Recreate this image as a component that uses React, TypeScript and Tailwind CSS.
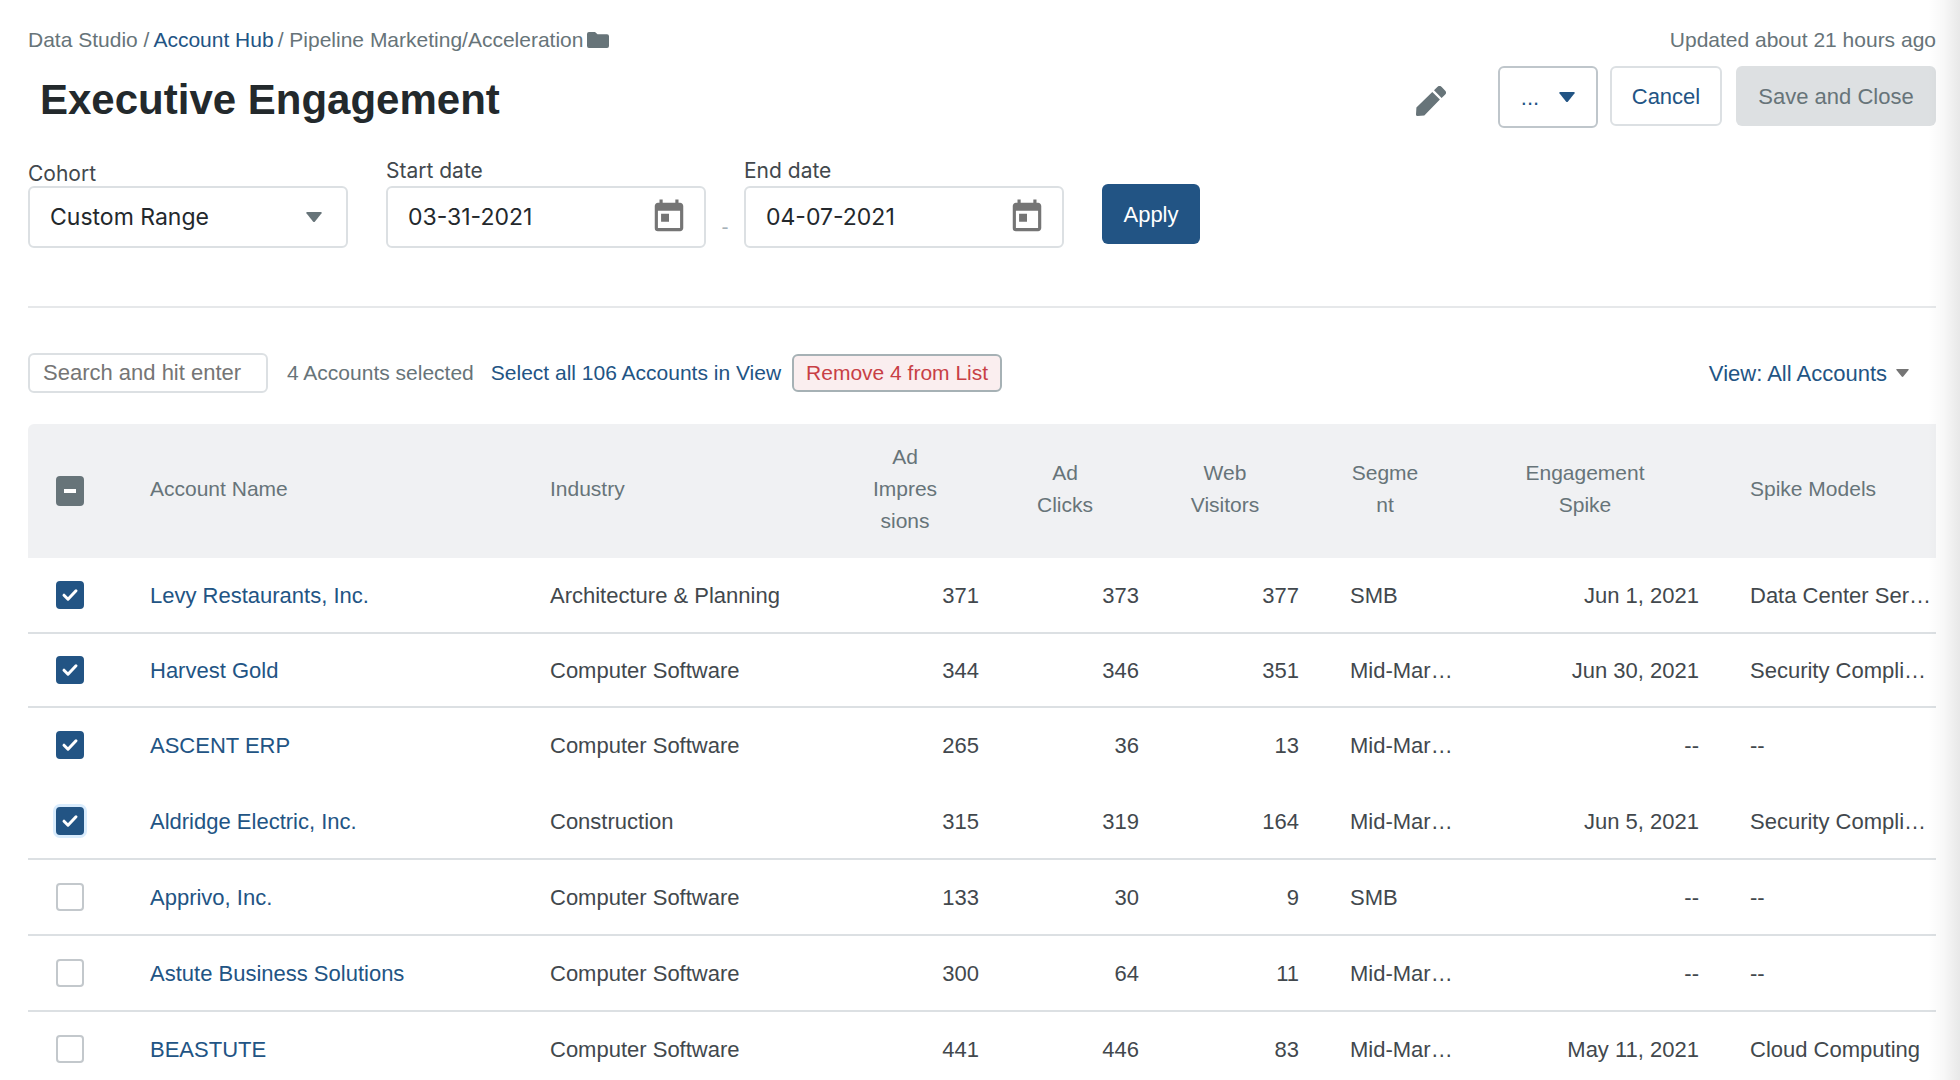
import React from 'react';
import { MdToday } from 'react-icons/md';

const font = "font-['Liberation_Sans',Arial,sans-serif]";
const inter = "font-['Inter',sans-serif]";

type Account = {
  name: string;
  industry: string;
  impressions: number;
  clicks: number;
  visitors: number;
  segment: string;
  spike: string;
  models: string;
  checked: boolean;
};

const accounts: Account[] = [
  { name: 'Levy Restaurants, Inc.', industry: 'Architecture & Planning', impressions: 371, clicks: 373, visitors: 377, segment: 'SMB', spike: 'Jun 1, 2021', models: 'Data Center Ser…', checked: true },
  { name: 'Harvest Gold', industry: 'Computer Software', impressions: 344, clicks: 346, visitors: 351, segment: 'Mid-Mar…', spike: 'Jun 30, 2021', models: 'Security Compli…', checked: true },
  { name: 'ASCENT ERP', industry: 'Computer Software', impressions: 265, clicks: 36, visitors: 13, segment: 'Mid-Mar…', spike: '--', models: '--', checked: true },
  { name: 'Aldridge Electric, Inc.', industry: 'Construction', impressions: 315, clicks: 319, visitors: 164, segment: 'Mid-Mar…', spike: 'Jun 5, 2021', models: 'Security Compli…', checked: true },
  { name: 'Apprivo, Inc.', industry: 'Computer Software', impressions: 133, clicks: 30, visitors: 9, segment: 'SMB', spike: '--', models: '--', checked: false },
  { name: 'Astute Business Solutions', industry: 'Computer Software', impressions: 300, clicks: 64, visitors: 11, segment: 'Mid-Mar…', spike: '--', models: '--', checked: false },
  { name: 'BEASTUTE', industry: 'Computer Software', impressions: 441, clicks: 446, visitors: 83, segment: 'Mid-Mar…', spike: 'May 11, 2021', models: 'Cloud Computing', checked: false },
];

function Caret({ className }: { className: string }) {
  return (
    <svg viewBox="0 0 16 10" className={className} fill="currentColor" aria-hidden="true">
      <path d="M1 0h14a.8.8 0 0 1 .6 1.3L9 9.4a1.3 1.3 0 0 1-2 0L.4 1.3A.8.8 0 0 1 1 0z" />
    </svg>
  );
}

function RowCheckbox({ label, checked, focused }: { label: string; checked: boolean; focused?: boolean }) {
  return (
    <span className="grid w-7">
      <input
        type="checkbox"
        aria-label={label}
        defaultChecked={checked}
        className={`peer col-start-1 row-start-1 h-7 w-7 appearance-none rounded border-2 border-[#c3c8cc] bg-white checked:border-[#225484] checked:bg-[#225484] ${focused ? 'ring-3 ring-[#d9ecfd]' : ''}`}
      />
      <svg viewBox="0 0 28 28" className="pointer-events-none col-start-1 row-start-1 hidden h-7 w-7 peer-checked:block" fill="none" stroke="#fff" strokeWidth="3" strokeLinecap="round" strokeLinejoin="round">
        <path d="M8 14.2l4 4 8-8.4" />
      </svg>
    </span>
  );
}

function DateField({ id, label, value }: { id: string; label: string; value: string }) {
  return (
    <div className="flex flex-col gap-[3px]">
      <label htmlFor={id} className={`${inter} leading-6 text-[#42484d]`}>{label}</label>
      <div className="flex h-[62px] w-80 items-center justify-between rounded-md border-2 border-[#dce0e3] pr-4 pl-5">
        <input id={id} defaultValue={value} className={`${inter} w-44 text-[23px] text-[#23282c] outline-none`} />
        <button aria-label={`Choose ${label.toLowerCase()}`} className="text-[#757575]">
          <MdToday className="size-[38px]" />
        </button>
      </div>
    </div>
  );
}

export default function App() {
  return (
    <div className={`${font} relative h-screen overflow-hidden bg-white px-6 pl-7 text-[21px] text-[#677479]`}>
      <div className="flex items-center justify-between pt-6">
        <nav className="flex items-center gap-1 leading-8">
          <span>Data Studio /</span>
          <a href="#" className="text-[#225484]">Account Hub</a>
          <span>/ Pipeline Marketing/Acceleration</span>
          <svg viewBox="0 0 22 16" className="h-4 w-[22px]" fill="currentColor" aria-hidden="true">
            <path d="M2 0h6l2.500 2.200H20a2 2 0 0 1 2 2V14a2 2 0 0 1-2 2H2a2 2 0 0 1-2-2V2a2 2 0 0 1 2-2z" />
          </svg>
        </nav>
        <span className="leading-8">Updated about 21 hours ago</span>
      </div>

      <header className="mt-2 flex items-start">
        <h1 className="flex-1 pt-[10px] pl-3 text-[42px] leading-[52px] font-bold text-[#23292c]">Executive Engagement</h1>
        <button aria-label="Edit name" className="mt-[22px] mr-[52px]">
          <svg viewBox="0 0 30 30" className="size-[30px]" fill="currentColor">
            <path d="M.4 21.500L16.300 5.900l7.600 7.600L8.300 29.400 1.500 30A1.500 1.500 0 0 1 0 28.400z" />
            <path d="M18 4.300l3.300-3.300a3 3 0 0 1 4.400 0l3.300 3.400a3 3 0 0 1 0 4.300l-3.400 3.300z" />
          </svg>
        </button>
        <button className="mt-[2px] mr-3 flex h-[62px] w-[100px] items-center justify-center gap-5 rounded-md border-2 border-[#bfc6cb] text-[22px] text-[#225484]" aria-label="More actions">
          <span>...</span>
          <Caret className="h-[10px] w-4" />
        </button>
        <button className="mt-[2px] mr-[14px] h-[60px] w-28 rounded-md border-2 border-[#dce0e3] text-[22px] text-[#225484]">Cancel</button>
        <button disabled className="mt-[2px] h-[60px] w-[200px] rounded-md bg-[#dde0e2] text-[22px]">Save and Close</button>
      </header>

      <section className="mt-[31px] flex items-end border-b-2 border-[#e6e8ea] pb-[58px]">
        <div className="flex flex-col">
          <label htmlFor="cohort" className={`${inter} leading-6 text-[#42484d]`}>Cohort</label>
          <div className="grid items-center">
            <select id="cohort" className={`${inter} col-start-1 row-start-1 h-[62px] w-80 appearance-none rounded-md border-2 border-[#dce0e3] bg-white px-5 text-[23px] text-[#23282c]`}>
              <option>Custom Range</option>
            </select>
            <Caret className="pointer-events-none col-start-1 row-start-1 mr-[26px] h-[10px] w-4 justify-self-end" />
          </div>
        </div>
        <div className="ml-[38px]">
          <DateField id="start-date" label="Start date" value="03-31-2021" />
        </div>
        <span className="w-[38px] pb-[6px] text-center text-[#a6b1b8]">-</span>
        <DateField id="end-date" label="End date" value="04-07-2021" />
        <button className="mb-1 ml-[38px] h-[60px] w-[98px] rounded-md bg-[#225484] text-[22px] text-white">Apply</button>
      </section>

      <section className="flex h-[116px] items-center pt-[14px]">
        <input aria-label="Search accounts" placeholder="Search and hit enter" className="h-10 w-60 rounded-md border-2 border-[#dce0e3] px-[13px] text-[22px] placeholder:text-[#757575]" />
        <span className="ml-[19px]">4 Accounts selected</span>
        <a href="#" className="ml-[17px] text-[#225484]">Select all 106 Accounts in View</a>
        <button className="ml-[11px] h-[38px] w-[210px] rounded-md border-2 border-[#a6b1b5] bg-[#faeeef] text-[#c83f45]">Remove 4 from List</button>
        <button className="mr-[26px] ml-auto flex items-center gap-2 text-[22px]">
          <span className="text-[#225484]">View: All Accounts</span>
          <Caret className="h-2 w-[15px] text-[#757575]" />
        </button>
      </section>

      <table className="w-full table-fixed border-separate border-spacing-0 text-left text-[22px] text-[#42484d]">
        <colgroup>
          <col className="w-[77px]" />
          <col className="w-[400px]" />
          <col className="w-80" />
          <col className="w-40" />
          <col className="w-40" />
          <col className="w-40" />
          <col className="w-40" />
          <col className="w-60" />
          <col />
        </colgroup>
        <thead className="bg-[#f0f1f3] text-[21px] leading-8 text-[#677479] [&_th]:font-normal [&_th]:wrap-break-word">
          <tr className="h-[134px] [&_th]:pt-0 [&_th]:pb-1">
            <th className="rounded-tl-md pl-7">
              <button aria-label="Clear selection" className="mt-1 flex h-[30px] w-7 items-center justify-center rounded bg-[#677479]">
                <span className="h-1 w-3 bg-white" />
              </button>
            </th>
            <th className="pl-[45px]">Account Name</th>
            <th className="pl-[45px]">Industry</th>
            <th className="px-[45px] text-center">Ad Impressions</th>
            <th className="px-[45px] text-center">Ad Clicks</th>
            <th className="px-[45px] text-center">Web Visitors</th>
            <th className="px-[45px] text-center">Segment</th>
            <th className="px-[45px] text-center">Engagement Spike</th>
            <th className="pl-[45px]">Spike Models</th>
          </tr>
        </thead>
        <tbody className="[&_td]:border-b-2 [&_td]:border-[#dce0e3]">
          {accounts.map((a) => (
            <tr key={a.name} className={`h-[76px] nth-2:h-[74px] ${a.name === 'ASCENT ERP' ? '[&_td]:border-transparent!' : ''}`}>
              <td className="pl-7">
                <RowCheckbox label={`Select ${a.name}`} checked={a.checked} focused={a.name === 'Aldridge Electric, Inc.'} />
              </td>
              <td className="pl-[45px]">
                <a href="#" className="text-[#225484]">{a.name}</a>
              </td>
              <td className="pl-[45px]">{a.industry}</td>
              <td className="pr-[6px] text-right">{a.impressions}</td>
              <td className="pr-[6px] text-right">{a.clicks}</td>
              <td className="pr-[6px] text-right">{a.visitors}</td>
              <td className="pl-[45px] whitespace-nowrap">{a.segment}</td>
              <td className="pr-[6px] text-right">{a.spike}</td>
              <td className="pl-[45px] whitespace-nowrap">{a.models}</td>
            </tr>
          ))}
        </tbody>
      </table>

      {/* edge shade of the neighbouring panel */}
      <div className="pointer-events-none absolute inset-y-0 right-0 w-8 bg-linear-to-l from-black/9 via-black/3 to-transparent" />
    </div>
  );
}
